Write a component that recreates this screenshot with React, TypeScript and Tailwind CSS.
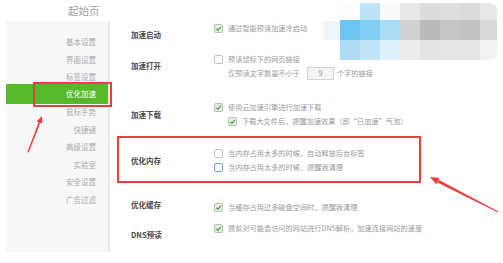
import clsx from 'clsx';

const sideItems = ['基本设置', '界面设置', '标签设置', '优化加速', '鼠标手势', '快捷键', '高级设置', '实验室', '安全设置', '广告过滤'];

// blurred mosaic in the top right corner, one class per block
const mosaicRows = [
    ['bg-[#fdfdfd]', 'bg-[#bde3f6]', 'bg-[#fafafa]', 'bg-[#e6e7e7]', 'bg-[#dcdcdc]', 'bg-[#dddede]', 'bg-[#dadbdc]', 'bg-[#e6e7e7] rounded-tr-[8px]'],
    ['bg-[#6ac5f0]', 'bg-[#80cff3]', 'bg-[#a8dcf5]', 'bg-[#cfd1d1]', 'bg-[#b9bbbb]', 'bg-[#c3c5c6]', 'bg-[#c0c2c3]', 'bg-[#d8d9da]'],
    ['bg-[#acdcf4]', 'bg-[#c0e4f6]', 'bg-[#ddf0fb]', 'bg-[#ececec]', 'bg-[#e3e4e4]', 'bg-[#e6e6e6]', 'bg-[#e4e5e6]', 'bg-[#f0f1f1] rounded-br-[8px]'],
];

function Check({ checked, blue }: { checked?: boolean; blue?: boolean }) {
    return (
        <span
            className={clsx(
                'flex h-[9px] w-[9px] shrink-0 items-center justify-center rounded-[2px] border',
                blue ? 'border-[#6aa3e8] bg-white' : checked ? 'border-[#bcbcbc] bg-[#ededed]' : 'border-[#c4c4c4] bg-white'
            )}
        >
            {checked && (
                <svg viewBox="0 0 10 10" className="h-[7px] w-[7px]">
                    <path d="M1.8 5.2 L4.2 7.4 L8.4 2.6" fill="none" stroke="#46b040" strokeWidth="1.9" />
                </svg>
            )}
        </span>
    );
}

function Option({ checked, blue, text, className }: { checked?: boolean; blue?: boolean; text: string; className?: string }) {
    return (
        <div className={clsx('flex h-[14px] items-center gap-[5px] whitespace-nowrap', className)}>
            <Check checked={checked} blue={blue} />
            <span>{text}</span>
        </div>
    );
}

function Label({ text, mt }: { text: string; mt: string }) {
    return <div className={clsx('w-[104px] shrink-0 pl-[21px] text-[7.5px] font-semibold leading-[14px] text-[#4a4a4a]', mt)}>{text}</div>;
}

export default function App() {
    return (
        <div className="relative h-[263px] w-[503px] overflow-hidden bg-white font-['Noto_Sans_CJK_SC',sans-serif]">
            <div className="h-[21px] pl-[68px] text-[10.5px] leading-[21px] text-[#a0a0a0]">起始页</div>

            <div className="flex h-[231px] pl-[6px]">
                {/* sidebar */}
                <div className="w-[104px] shrink-0 border-r-2 border-[#e8e9eb] bg-[#f6f7f9] pt-[12px]">
                    {sideItems.map((item) =>
                        item === '优化加速' ? (
                            <div key={item} className="-my-[1.25px] h-[20px] bg-[#55b92a] pr-[12px] text-right text-[7.5px] leading-[20px] text-white">
                                {item}
                            </div>
                        ) : (
                            <div key={item} className="h-[17.5px] pr-[12px] text-right text-[7.5px] leading-[17.5px] text-[#acacac]">
                                {item}
                            </div>
                        )
                    )}
                </div>

                {/* settings */}
                <div className="flex flex-1 flex-col text-[7.2px] leading-[14px] text-[#9a9a9a]">
                    <div className="flex h-[28px] items-start">
                        <Label text="加速启动" mt="mt-[7px]" />
                        <div>
                            <Option checked text="通过智能预读加速冷启动" />
                        </div>
                    </div>

                    <div className="flex h-[34px] items-start">
                        <Label text="加速打开" mt="mt-[10px]" />
                        <div className="mt-[3px]">
                            <Option text="预读鼠标下的网页链接" />
                            <div className="flex h-[14px] items-center whitespace-nowrap pl-[14px]">
                                <span>仅预读文字数量不小于</span>
                                <span className="ml-[7px] h-[13px] w-[27px] border border-[#d4d4d4] bg-[#f4f4f4] text-center leading-[11px] text-[#999]">9</span>
                                <span className="ml-[3px]">个字的链接</span>
                            </div>
                        </div>
                    </div>

                    <div className="flex h-[53px] items-start">
                        <Label text="加速下载" mt="mt-[25px]" />
                        <div className="mt-[17px]">
                            <Option checked text="使用云加速引擎进行加速下载" />
                            <Option checked text="下载大文件后，提醒加速效果（即“已加速”气泡）" className="ml-[14px]" />
                        </div>
                    </div>

                    <div className="ml-[7px] flex h-[47px] w-[304px] items-start border-2 border-[#e8403f]">
                        <div className="mt-[16px] w-[95px] shrink-0 pl-[12px] text-[7.5px] font-semibold leading-[14px] text-[#4a4a4a]">优化内存</div>
                        <div className="mt-[8px]">
                            <Option text="当内存占用太多的时候，自动释放后台标签" />
                            <Option blue text="当内存占用太多的时候，提醒我清理" />
                        </div>
                    </div>

                    <div className="flex h-[31px] items-start">
                        <Label text="优化缓存" mt="mt-[15px]" />
                        <div className="mt-[17px]">
                            <Option checked text="当缓存占用过多磁盘空间时，提醒我清理" />
                        </div>
                    </div>

                    <div className="flex items-start">
                        <Label text="DNS预读" mt="mt-[14px]" />
                        <div className="mt-[7px]">
                            <Option checked text="提前对可能会访问的网站进行DNS解析，加速连接网站的速度" />
                        </div>
                    </div>
                </div>
            </div>

            {/* annotation: red box around the active menu item */}
            <div className="absolute left-[33px] top-[82px] h-[25px] w-[79px] border-2 border-[#e8403f]" />

            {/* mosaic */}
            <div className="absolute left-[323px] top-[21px] h-[19px] w-[17px] bg-[#eef6fc]" />
            <div className="absolute left-[340px] top-[3px] grid grid-cols-[20px_20px_20px_20px_20px_20px_20px_17px] grid-rows-[17px_20px_20px]">
                {mosaicRows.flat().map((c, i) => (
                    <div key={i} className={c} />
                ))}
            </div>

            {/* annotation arrows */}
            <svg className="pointer-events-none absolute left-0 top-0" width="503" height="263" viewBox="0 0 503 263">
                <polygon points="27.4,152 28.6,152.4 40.4,122.8 38.6,122.2" fill="#ef3b3b" />
                <polygon points="42,116 42.3,123.6 36.7,121.4" fill="#ef3b3b" />
                <polygon points="498,212.4 498.3,211.6 439,180 437.4,182.6" fill="#ef3b3b" />
                <polygon points="430,177 439.6,178 436.4,184.2" fill="#ef3b3b" />
            </svg>
        </div>
    );
}
